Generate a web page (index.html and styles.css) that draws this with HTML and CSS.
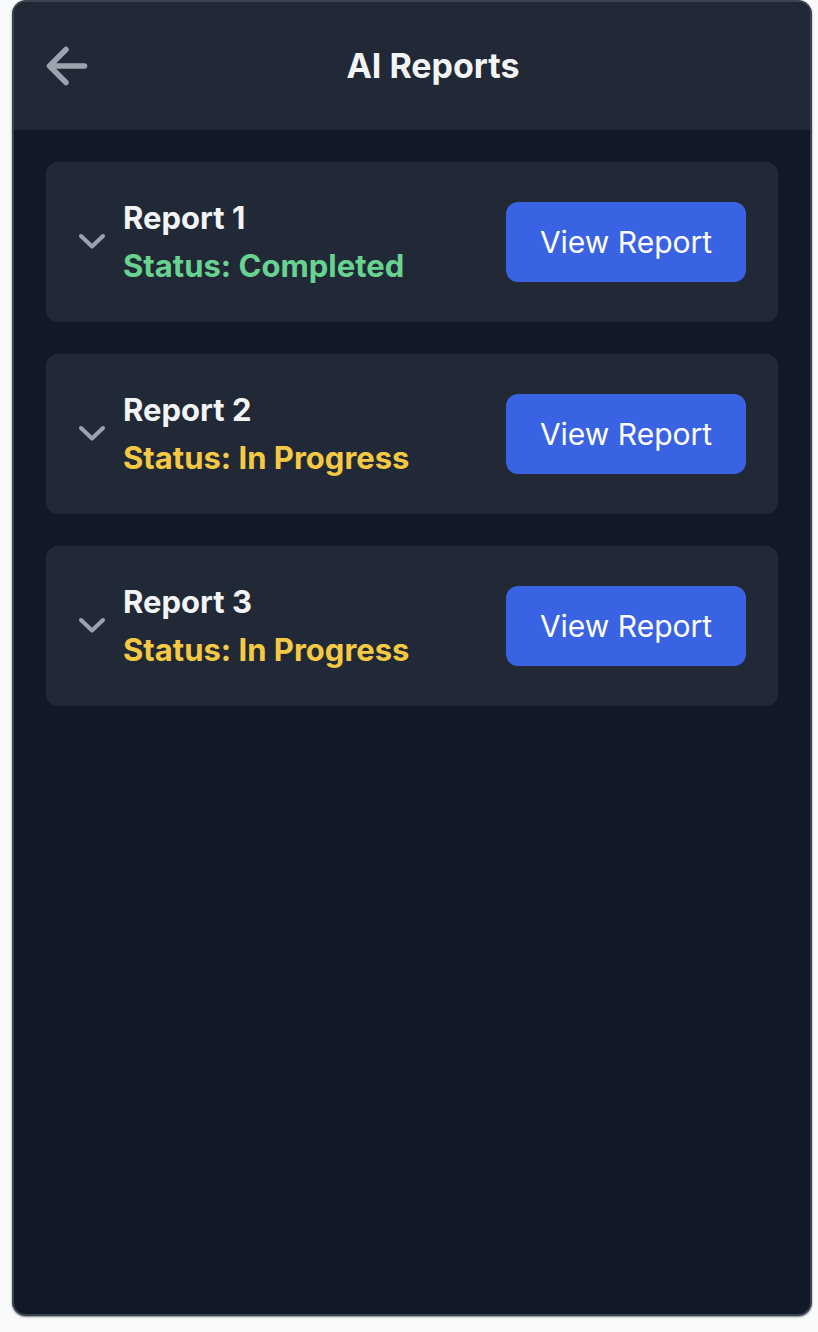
FILE: index.html
```html
<!DOCTYPE html>
<html lang="en">
<head>
<meta charset="utf-8">
<title>AI Reports</title>
<link rel="stylesheet" href="styles.css">
</head>
<body>
<div class="app">
  <header class="header">
    <button class="back" aria-label="Back">
      <svg width="44" height="44" viewBox="0 0 44 44" fill="none" stroke="#9ca3af" stroke-width="5.5" stroke-linecap="round" stroke-linejoin="round">
        <path d="M3.5 22H38.5M20 5.5L3.5 22L20 38.5"/>
      </svg>
    </button>
    <h1 class="title">AI Reports</h1>
  </header>
  <main class="list">
    <div class="card">
      <div class="card-left">
        <svg class="chev" width="30" height="20" viewBox="0 0 30 20" fill="none" stroke="#9ca3af" stroke-width="4" stroke-linecap="round" stroke-linejoin="round">
          <path d="M3 5L14 15.5L25 5"/>
        </svg>
        <div class="info">
          <div class="name">Report 1</div>
          <div class="status done">Status: Completed</div>
        </div>
      </div>
      <button class="view">View Report</button>
    </div>
    <div class="card">
      <div class="card-left">
        <svg class="chev" width="30" height="20" viewBox="0 0 30 20" fill="none" stroke="#9ca3af" stroke-width="4" stroke-linecap="round" stroke-linejoin="round">
          <path d="M3 5L14 15.5L25 5"/>
        </svg>
        <div class="info">
          <div class="name">Report 2</div>
          <div class="status progress">Status: In Progress</div>
        </div>
      </div>
      <button class="view">View Report</button>
    </div>
    <div class="card">
      <div class="card-left">
        <svg class="chev" width="30" height="20" viewBox="0 0 30 20" fill="none" stroke="#9ca3af" stroke-width="4" stroke-linecap="round" stroke-linejoin="round">
          <path d="M3 5L14 15.5L25 5"/>
        </svg>
        <div class="info">
          <div class="name">Report 3</div>
          <div class="status progress">Status: In Progress</div>
        </div>
      </div>
      <button class="view">View Report</button>
    </div>
  </main>
</div>
</body>
</html>
```
FILE: styles.css
```css
* { box-sizing: border-box; }
html, body { margin: 0; padding: 0; }
body {
  background: #f9fafb;
  font-family: Inter, "Noto Sans", sans-serif;
  padding: 0 6px 0 12px;
  height: 1332px;
}
.app {
  width: 800px;
  height: 1316px;
  background: #111827;
  border: 2px solid #374151;
  border-top-color: #3b4350;
  border-radius: 14px;
  overflow: hidden;
  display: flex;
  flex-direction: column;
  box-shadow: 0 1px 2px rgba(0,0,0,0.5);
}
.header {
  height: 128px;
  background: #222936;
  display: flex;
  align-items: center;
  padding: 0 32px;
  flex-shrink: 0;
}
.back {
  background: none;
  border: 0;
  padding: 0;
  width: 44px;
  height: 44px;
  margin-top: 0;
  display: flex;
  cursor: pointer;
}
.title {
  flex: 1;
  margin: 0;
  text-align: center;
  color: #f3f4f6;
  font-size: 34px;
  font-weight: 700;
  line-height: 40px;
  margin-left: -2px;
}
.list {
  padding: 32px;
  display: flex;
  flex-direction: column;
  gap: 32px;
}
.card {
  height: 160px;
  background: #222936;
  border-radius: 12px;
  padding: 0 32px;
  display: flex;
  align-items: center;
  justify-content: space-between;
}
.card-left {
  display: flex;
  align-items: center;
  gap: 15px;
}
.chev { display: block; margin-top: -2px; }
.name {
  color: #f3f4f6;
  font-size: 31px;
  font-weight: 700;
  line-height: 48px;
}
.status {
  font-size: 31px;
  font-weight: 700;
  line-height: 48px;
}
.status.done { color: #68d391; }
.status.progress { color: #f5c944; }
.view {
  width: 240px;
  height: 80px;
  background: #3a63e3;
  color: #ffffff;
  border: 0;
  border-radius: 12px;
  font-family: Inter, "Noto Sans", sans-serif;
  font-size: 30px;
  font-weight: 400;
  cursor: pointer;
}
```
